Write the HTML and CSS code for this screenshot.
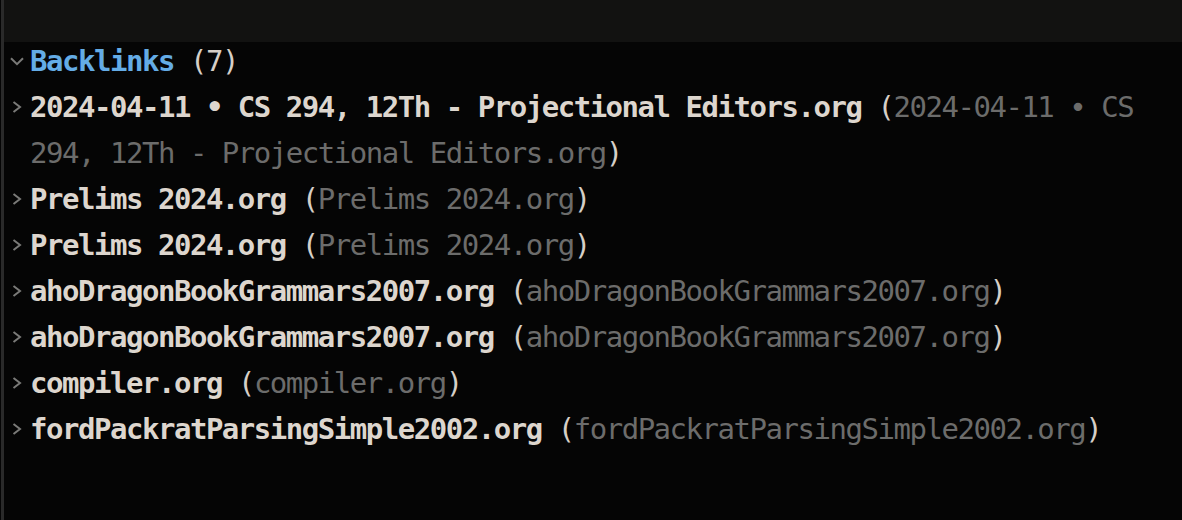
FILE: index.html
```html
<!DOCTYPE html>
<html>
<head>
<meta charset="utf-8">
<link rel="stylesheet" href="styles.css">
</head>
<body>
<div class="frame">
  <div class="topbar"></div>
  <div class="list">
    <div class="row">
      <span class="chev down"><svg width="14" height="9" viewBox="0 0 14 9"><path d="M1 1.2 L7 7.2 L13 1.2" fill="none" stroke="#7a7a78" stroke-width="2"/></svg></span>
      <span class="text"><span class="title">Backlinks</span> <span class="paren">(7)</span></span>
    </div>
    <div class="row">
      <span class="chev"><svg width="10" height="12" viewBox="0 0 10 12"><path d="M1.5 1 L8 6 L1.5 11" fill="none" stroke="#7a7a78" stroke-width="2"/></svg></span>
      <span class="text"><b>2024-04-11 • CS 294, 12Th - Projectional Editors.org</b> <span class="paren">(</span><span class="dim">2024-04-11 • CS 294, 12Th - Projectional Editors.org</span><span class="paren">)</span></span>
    </div>
    <div class="row">
      <span class="chev"><svg width="10" height="12" viewBox="0 0 10 12"><path d="M1.5 1 L8 6 L1.5 11" fill="none" stroke="#7a7a78" stroke-width="2"/></svg></span>
      <span class="text"><b>Prelims 2024.org</b> <span class="paren">(</span><span class="dim">Prelims 2024.org</span><span class="paren">)</span></span>
    </div>
    <div class="row">
      <span class="chev"><svg width="10" height="12" viewBox="0 0 10 12"><path d="M1.5 1 L8 6 L1.5 11" fill="none" stroke="#7a7a78" stroke-width="2"/></svg></span>
      <span class="text"><b>Prelims 2024.org</b> <span class="paren">(</span><span class="dim">Prelims 2024.org</span><span class="paren">)</span></span>
    </div>
    <div class="row">
      <span class="chev"><svg width="10" height="12" viewBox="0 0 10 12"><path d="M1.5 1 L8 6 L1.5 11" fill="none" stroke="#7a7a78" stroke-width="2"/></svg></span>
      <span class="text"><b>ahoDragonBookGrammars2007.org</b> <span class="paren">(</span><span class="dim">ahoDragonBookGrammars2007.org</span><span class="paren">)</span></span>
    </div>
    <div class="row">
      <span class="chev"><svg width="10" height="12" viewBox="0 0 10 12"><path d="M1.5 1 L8 6 L1.5 11" fill="none" stroke="#7a7a78" stroke-width="2"/></svg></span>
      <span class="text"><b>ahoDragonBookGrammars2007.org</b> <span class="paren">(</span><span class="dim">ahoDragonBookGrammars2007.org</span><span class="paren">)</span></span>
    </div>
    <div class="row">
      <span class="chev"><svg width="10" height="12" viewBox="0 0 10 12"><path d="M1.5 1 L8 6 L1.5 11" fill="none" stroke="#7a7a78" stroke-width="2"/></svg></span>
      <span class="text"><b>compiler.org</b> <span class="paren">(</span><span class="dim">compiler.org</span><span class="paren">)</span></span>
    </div>
    <div class="row">
      <span class="chev"><svg width="10" height="12" viewBox="0 0 10 12"><path d="M1.5 1 L8 6 L1.5 11" fill="none" stroke="#7a7a78" stroke-width="2"/></svg></span>
      <span class="text"><b>fordPackratParsingSimple2002.org</b> <span class="paren">(</span><span class="dim">fordPackratParsingSimple2002.org</span><span class="paren">)</span></span>
    </div>
  </div>
</div>
</body>
</html>
```

FILE: styles.css
```css
html, body {
  margin: 0;
  padding: 0;
  background: #050505;
  width: 1182px;
  height: 520px;
  overflow: hidden;
}
.frame {
  margin-left: 1px;
  border-left: 3px solid #2a2a2a;
  height: 520px;
  box-sizing: border-box;
}
.topbar {
  height: 42px;
  background: #121211;
}
.list {
  margin-top: -4px;
  font-family: "DejaVu Sans Mono", monospace;
  font-size: 29px;
  letter-spacing: -1.47px;
  line-height: 46px;
  color: #d6cfc7;
}
.row {
  display: flex;
  align-items: flex-start;
}
.chev {
  flex: 0 0 26px;
  height: 46px;
  display: flex;
  align-items: center;
  padding-left: 8px;
  box-sizing: border-box;
}
.chev.down {
  padding-left: 6px;
  padding-top: 1px;
}
.chev svg {
  display: block;
}
.text {
  flex: 1;
  min-width: 0;
  padding-right: 10px;
}
.text b {
  font-weight: bold;
  color: #ddd6ce;
}
.title {
  font-weight: bold;
  color: #64ace6;
}
.paren {
  color: #d6cfc7;
}
.dim {
  color: #6c6c6b;
}
```
